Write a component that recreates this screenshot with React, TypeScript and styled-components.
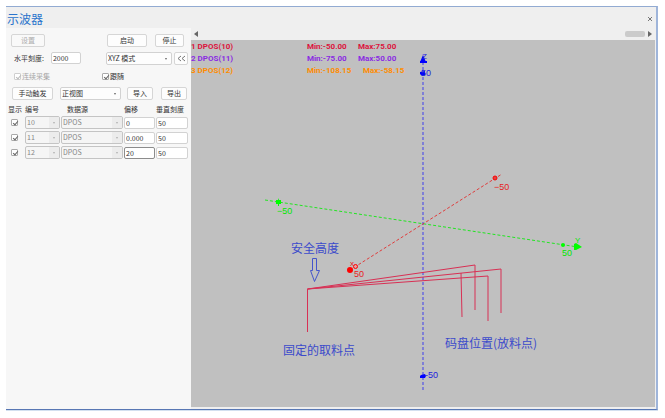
import React from "react";
import styled, { createGlobalStyle } from "styled-components";

const GlobalStyle = createGlobalStyle`
  * { box-sizing: border-box; }
  body {
    margin: 0;
    background: #fff;
    font-family: "Noto Sans CJK SC", "Noto Sans", sans-serif;
    font-size: 7px;
    line-height: 10px;
    color: #333;
  }
  button, input, select { font: inherit; color: inherit; margin: 0; }
`;

const Page = styled.div`
  height: 100vh;
  min-height: 240px;
  padding: 6px 7px 8px 6px;
`;

const Window = styled.main`
  height: 100%;
  display: flex;
  flex-direction: column;
  background: #efefef;
  border-top: 1px solid #92abd2;
  border-right: 2px solid #9fb5da;
  border-bottom: 1px solid #5877b4;
  box-shadow: 0 1px 0 #d3e0ef;
`;

const TitleBar = styled.header`
  flex: none;
  height: 21px;
  display: flex;
  align-items: center;
  justify-content: space-between;
  padding: 2px 3px 0 1px;
`;

const Title = styled.h1`
  margin: 0;
  font-size: 12px;
  line-height: 18px;
  font-weight: 400;
  color: #2a74cc;
`;

const IconButton = styled.button`
  display: flex;
  align-items: center;
  justify-content: center;
  padding: 0;
  border: 0;
  background: none;
`;

const Content = styled.div`
  flex: 1;
  min-height: 0;
  display: flex;
`;

const Panel = styled.section`
  flex: none;
  width: 185px;
  display: flex;
  flex-direction: column;
  background: #f7f7f7;
  padding: 4px 2px 0 2px;
`;

const Row = styled.div<{ $h: number; $indent?: number }>`
  height: ${(p) => p.$h}px;
  display: flex;
  align-items: center;
  padding-left: ${(p) => p.$indent ?? 0}px;
`;

const Half = styled.div<{ $w: number; $gap?: number }>`
  width: ${(p) => p.$w}px;
  display: flex;
  align-items: center;
  gap: ${(p) => p.$gap ?? 0}px;
`;

const Button = styled.button<{ $w: number }>`
  width: ${(p) => p.$w}px;
  height: 13px;
  display: flex;
  align-items: center;
  justify-content: center;
  padding: 0;
  border: 1px solid #d6d6d6;
  border-radius: 2px;
  background: #fdfdfd;
  line-height: 10px;
  white-space: nowrap;
  &:disabled { color: #adadad; background: #f9f9f9; }
`;

const Field = styled.input<{ $w?: number }>`
  width: ${(p) => (p.$w ? `${p.$w}px` : "100%")};
  height: 12px;
  display: block;
  padding: 0 1px;
  border: 1px solid #d2d2d2;
  border-radius: 2px;
  background: #fff;
  line-height: 10px;
  outline: 0;
  &:focus { border-color: #8c8c8c; }
`;

const SelectBox = styled.span<{ $w?: number; $off?: boolean }>`
  position: relative;
  display: block;
  width: ${(p) => (p.$w ? `${p.$w}px` : "100%")};
  height: 13px;
  border: 1px solid ${(p) => (p.$off ? "#c4c4c4" : "#d2d2d2")};
  border-radius: 2px;
  background: ${(p) => (p.$off ? "#f5f5f5" : "#fdfdfd")};
  overflow: hidden;
  &::after {
    content: "";
    position: absolute;
    right: 4px;
    top: 5px;
    border: 1px solid transparent;
    border-top: 2px solid ${(p) => (p.$off ? "#b0b0b0" : "#666")};
    pointer-events: none;
  }
`;

const Select = styled.select`
  appearance: none;
  display: block;
  width: 100%;
  height: 11px;
  padding: 0 12px 0 1px;
  border: 0;
  background: transparent;
  line-height: 11px;
  &:disabled {
    color: #858585;
    opacity: 1;
    background: linear-gradient(#ececec, #ececec) right / 10px 100% no-repeat;
  }
`;

const CheckLabel = styled.label<{ $off?: boolean }>`
  display: flex;
  align-items: center;
  gap: 1px;
  color: ${(p) => (p.$off ? "#a6a6a6" : "#333")};
`;

const Check = styled.input<{ $off?: boolean }>`
  appearance: none;
  flex: none;
  width: 7px;
  height: 7px;
  display: block;
  border: 1px solid ${(p) => (p.$off ? "#cfcfcf" : "#aaa")};
  border-radius: 1px;
  background: #fff;
  position: relative;
  &:checked::after {
    content: "";
    position: absolute;
    left: 2px;
    top: 0;
    width: 2px;
    height: 4px;
    border: solid ${(p) => (p.$off ? "#bbb" : "#666")};
    border-width: 0 1px 1px 0;
    transform: rotate(40deg);
  }
`;

const Channels = styled.table`
  width: 100%;
  table-layout: fixed;
  border-collapse: collapse;
  th {
    height: 13px;
    padding: 0;
    font-weight: 400;
    text-align: left;
    white-space: nowrap;
  }
  th:nth-child(3) { padding-left: 6px; }
  td { height: 15px; padding: 0 1px 0 0; vertical-align: middle; }
  td:first-child { padding-left: 3px; }
`;

const PlotArea = styled.section`
  flex: 1;
  min-width: 0;
  display: flex;
  flex-direction: column;
  padding: 0 1px 2px 0;
`;

const ScrollStrip = styled.div`
  flex: none;
  height: 12px;
  display: flex;
  align-items: center;
  justify-content: space-between;
  padding: 0 3px;
`;

const ScrollEnd = styled.div`
  display: flex;
  align-items: center;
  gap: 3px;
`;

const Thumb = styled.div`
  width: 20px;
  height: 6px;
  border-radius: 2px;
  background: #cbcbcb;
`;

const Plot = styled.div`
  flex: 1;
  min-height: 0;
  position: relative;
  background: #c0c0c0;
`;

const Scene = styled.svg`
  display: block;
  width: 100%;
  height: 100%;
`;

const Legend = styled.div`
  position: absolute;
  left: 0;
  top: 1px;
  font-family: Roboto, "Liberation Sans", sans-serif;
  font-size: 8px;
  font-weight: 700;
`;

const LegendRow = styled.div<{ $color: string; $wide?: boolean }>`
  display: grid;
  grid-template-columns: 116px ${(p) => (p.$wide ? 56 : 51)}px auto;
  height: 12px;
  line-height: 12px;
  white-space: pre;
  color: ${(p) => p.$color};
`;

const channels = [
  { id: "10", offset: "0" },
  { id: "11", offset: "0.000" },
  { id: "12", offset: "20", editing: true },
];

const legend = [
  { name: "1 DPOS(10)", min: "-50.00", max: "75.00", color: "#dc143c" },
  { name: "2 DPOS(11)", min: "-75.00", max: "50.00", color: "#8a2be2" },
  { name: "3 DPOS(12)", min: "-108.15", max: "-58.15", color: "#ff8c00", wide: true },
];

function caretToEnd(e: React.FocusEvent<HTMLInputElement>) {
  const end = e.currentTarget.value.length;
  e.currentTarget.setSelectionRange(end, end);
}

function Dropdown({ width, value, label, disabled }: {
  width?: number; value: string; label: string; disabled?: boolean;
}) {
  return (
    <SelectBox $w={width} $off={disabled}>
      <Select aria-label={label} disabled={disabled} defaultValue={value}>
        <option>{value}</option>
      </Select>
    </SelectBox>
  );
}

function AxisScene() {
  return (
    <Scene viewBox="191 40 464 367" preserveAspectRatio="xMidYMid meet" role="img" aria-label="XYZ">
      <g fill="none" strokeWidth="1">
        <path d="M423 57V390" stroke="#7f7fd6" strokeWidth="2" strokeDasharray="3 2" />
        <path d="M265 200L578 247" stroke="#22e522" strokeDasharray="3 2" />
        <path d="M350 270L502 174" stroke="#e03c3c" strokeDasharray="3 2" />
        <g stroke="#d83054">
          <path d="M307.5 332V289L475 265V310" />
          <path d="M307.5 289L501 269V313" />
          <path d="M307.5 289L488 276V321" />
          <path d="M461 273L462 317" />
        </g>
        <path d="M312.5 258.500h4v12h3l-5 11-4-11h2z" stroke="#4455cc" />
      </g>
      <g fill="#0000ff">
        <path d="M423 55l3 7h-6z" />
        <path d="M420 61h7v2h-7zM420 72l5-1v4l-3 1-2-2zM421 375l4-1 1 2-1 2h-5v-2z" />
      </g>
      <g fill="#00ff00">
        <path d="M278 198l1 2h2v4h-2v2h-1v-2h-2v-4h2z" />
        <path d="M574 244l2-1 6 4-6 3h-2z" />
        <circle cx="563" cy="245" r="2" />
      </g>
      <g fill="#ff0000">
        <circle cx="350" cy="270" r="3" />
        <circle cx="355.500" cy="266.500" r="2" fill="#e7a0a0" stroke="#f00" />
        <circle cx="495" cy="178" r="2" fill="#d44" stroke="#f00" />
      </g>
      <g fontFamily="Liberation Sans, sans-serif" fontSize="9">
        <g fill="#2222dd">
          <text x="422" y="59" fontSize="8">Z</text>
          <text x="421" y="76">50</text>
          <text x="425" y="378">-50</text>
        </g>
        <g fill="#00e600">
          <text x="277" y="214">−50</text>
          <text x="562" y="256">50</text>
          <text x="575" y="243" fontSize="8">Y</text>
        </g>
        <g fill="#e62222">
          <text x="354" y="277">50</text>
          <text x="494" y="190">−50</text>
          <text x="350" y="266" fontSize="8">x</text>
        </g>
      </g>
      <g fill="#3b4acb" fontFamily="Noto Sans CJK SC, sans-serif" fontSize="12">
        <text x="291" y="253">安全高度</text>
        <text x="283" y="355">固定的取料点</text>
        <text x="445" y="348">码盘位置(放料点)</text>
      </g>
    </Scene>
  );
}

export default function App() {
  return (
    <Page>
      <GlobalStyle />
      <Window>
        <TitleBar>
          <Title>示波器</Title>
          <IconButton aria-label="关闭">
            <svg width="6" height="6" viewBox="0 0 6 6" stroke="#777" strokeWidth="1">
              <path d="M1 1L5 5M5 1L1 5" />
            </svg>
          </IconButton>
        </TitleBar>
        <Content>
          <Panel>
            <Row $h={16} $indent={3}>
              <Half $w={96}><Button $w={34} disabled>设置</Button></Half>
              <Half $w={80} $gap={8}>
                <Button $w={40}>启动</Button>
                <Button $w={29}>停止</Button>
              </Half>
            </Row>
            <Row $h={20} $indent={6}>
              <Half $w={92} $gap={7}>
                <label htmlFor="scale">水平刻度:</label>
                <Field $w={30} id="scale" defaultValue="2000" />
              </Half>
              <Half $w={82} $gap={2}>
                <Dropdown width={66} value="XYZ 模式" label="模式" />
                <Button $w={14} aria-label="收起">
                  <svg width="9" height="7" viewBox="0 0 9 7" fill="none" stroke="#777">
                    <path d="M4 1L1 3.5L4 6M8 1L5 3.5L8 6" />
                  </svg>
                </Button>
              </Half>
            </Row>
            <Row $h={16} $indent={6}>
              <Half $w={88}>
                <CheckLabel $off><Check $off type="checkbox" defaultChecked disabled />连续采集</CheckLabel>
              </Half>
              <CheckLabel><Check type="checkbox" defaultChecked />跟随</CheckLabel>
            </Row>
            <Row $h={18} $indent={4}>
              <Half $w={115} $gap={7}>
                <Button $w={41}>手动触发</Button>
                <Dropdown width={61} value="正视图" label="视图" />
              </Half>
              <Half $w={61} $gap={8}>
                <Button $w={26}>导入</Button>
                <Button $w={26}>导出</Button>
              </Half>
            </Row>
            <Channels>
              <colgroup>
                <col width="17" />
                <col width="36" />
                <col width="63" />
                <col width="32" />
                <col />
              </colgroup>
              <thead>
                <tr><th>显示</th><th>编号</th><th>数据源</th><th>偏移</th><th>垂直刻度</th></tr>
              </thead>
              <tbody>
                {channels.map((c) => (
                  <tr key={c.id}>
                    <td><Check type="checkbox" defaultChecked aria-label={`显示 ${c.id}`} /></td>
                    <td><Dropdown value={c.id} label="编号" disabled /></td>
                    <td><Dropdown value="DPOS" label="数据源" disabled /></td>
                    <td><Field autoFocus={c.editing} onFocus={caretToEnd} defaultValue={c.offset} aria-label="偏移" /></td>
                    <td><Field defaultValue="50" aria-label="垂直刻度" /></td>
                  </tr>
                ))}
              </tbody>
            </Channels>
          </Panel>
          <PlotArea>
            <ScrollStrip>
              <IconButton aria-label="向左">
                <svg width="4" height="6" viewBox="0 0 4 6" fill="#666"><path d="M4 0v6L0 3z" /></svg>
              </IconButton>
              <ScrollEnd>
                <Thumb />
                <IconButton aria-label="向右">
                  <svg width="4" height="6" viewBox="0 0 4 6" fill="#666"><path d="M0 0v6L4 3z" /></svg>
                </IconButton>
              </ScrollEnd>
            </ScrollStrip>
            <Plot>
              <AxisScene />
              <Legend>
                {legend.map((l) => (
                  <LegendRow key={l.name} $color={l.color} $wide={l.wide}>
                    <span>{l.name}</span>
                    <span>Min:{l.min}</span>
                    <span>Max:{l.max}</span>
                  </LegendRow>
                ))}
              </Legend>
            </Plot>
          </PlotArea>
        </Content>
      </Window>
    </Page>
  );
}
